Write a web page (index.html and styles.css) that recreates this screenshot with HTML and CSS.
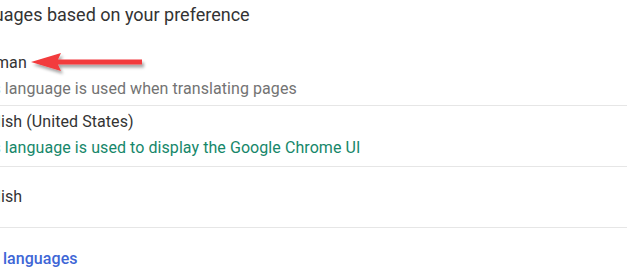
FILE: index.html
```html
<!DOCTYPE html>
<html>
<head>
<meta charset="utf-8">
<link rel="stylesheet" href="styles.css">
</head>
<body>
<div class="page">
  <div class="header">Order languages based on your preference</div>
  <div class="list">
    <div class="row row-first">
      <div class="primary">German</div>
      <div class="secondary">This language is used when translating pages</div>
    </div>
    <div class="row row-second">
      <div class="primary">English (United States)</div>
      <div class="secondary ui">This language is used to display the Google Chrome UI</div>
    </div>
    <div class="row">
      <div class="primary">English</div>
    </div>
  </div>
  <div class="add">Add languages</div>
</div>
<svg class="arrow" width="124" height="30" viewBox="0 0 124 30">
  <defs>
    <filter id="sh" x="-10%" y="-30%" width="130%" height="180%">
      <feDropShadow dx="2" dy="3" stdDeviation="1.5" flood-color="#000" flood-opacity="0.35"/>
    </filter>
  </defs>
  <polygon filter="url(#sh)" fill="#f23a3c" points="3,13 33,4 30,10.5 114,10.5 114,15.5 30,15.5 33,22"/>
</svg>
</body>
</html>
```
FILE: styles.css
```css
html, body {
  margin: 0;
  padding: 0;
  background: #ffffff;
  overflow: hidden;
}
body {
  position: relative;
  width: 627px;
  height: 275px;
  font-family: Roboto, "Noto Sans", sans-serif;
  font-size: 16px;
  color: #333333;
}
.page {
  margin-left: -30px;
  width: 720px;
  letter-spacing: 0.07px;
}
.header {
  height: 46px;
  line-height: 20px;
  padding-top: 5px;
  margin-left: -59px;
  box-sizing: border-box;
  font-size: 18px;
  letter-spacing: 0;
  color: #333333;
}
.row {
  box-sizing: border-box;
  height: 61px;
  border-bottom: 1px solid #e6e6e6;
  display: flex;
  flex-direction: column;
  justify-content: center;
}
.row-first {
  height: 60px;
}
.primary {
  line-height: 20px;
}
.row-second .primary {
  margin-top: -2px;
}
.secondary {
  line-height: 20px;
  margin-top: 6px;
  color: #737373;
}
.secondary.ui {
  color: #16876a;
}
.add {
  padding-top: 21px;
  margin-left: 0;
  line-height: 20px;
  color: #3e66d6;
  font-weight: 500;
}
.arrow {
  position: absolute;
  left: 28px;
  top: 49px;
}
```
